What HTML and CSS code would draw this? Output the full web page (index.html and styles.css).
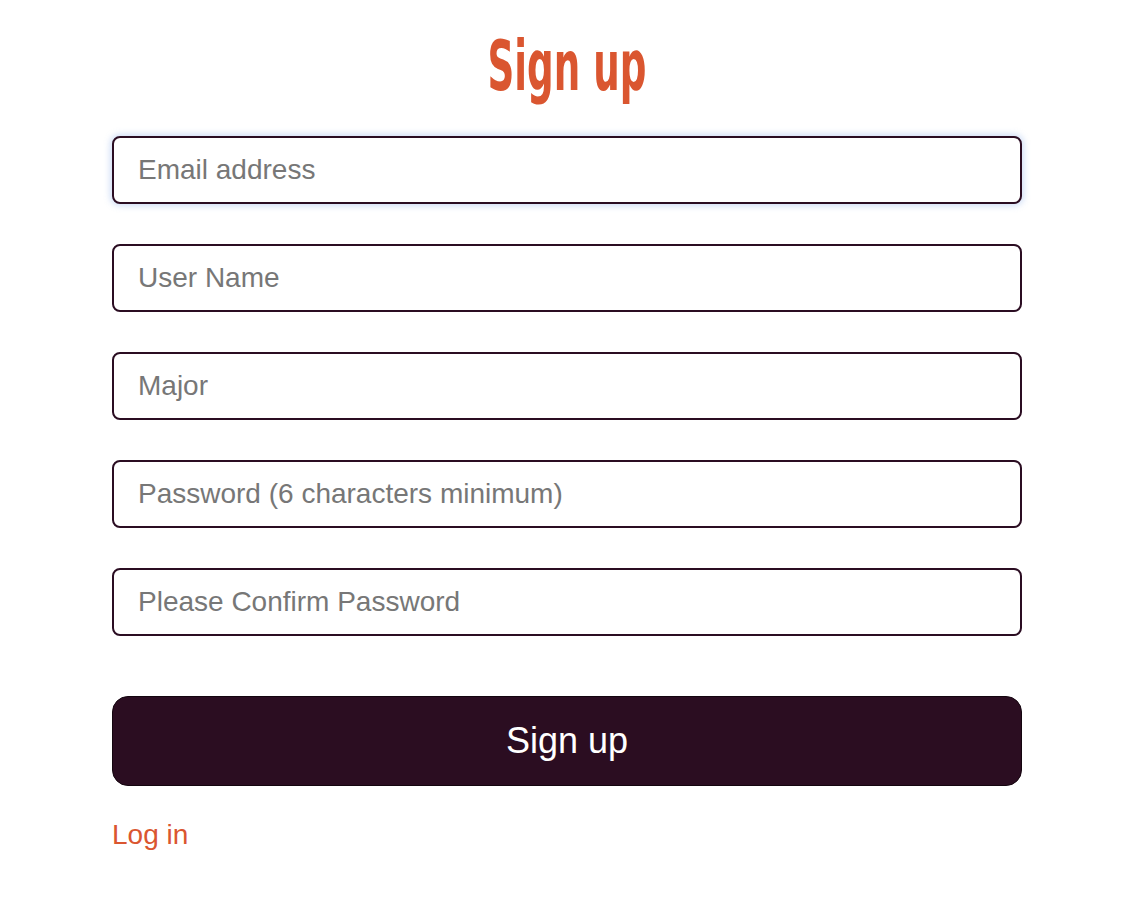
FILE: index.html
```html
<!DOCTYPE html>
<html lang="en">
<head>
<meta charset="utf-8">
<title>Sign up</title>
<link rel="stylesheet" href="styles.css">
</head>
<body>
<main class="page">
  <h1 class="title">Sign up</h1>
  <form class="form">
    <input class="field field--focus" type="email" placeholder="Email address">
    <input class="field" type="text" placeholder="User Name">
    <input class="field" type="text" placeholder="Major">
    <input class="field" type="password" placeholder="Password (6 characters minimum)">
    <input class="field" type="password" placeholder="Please Confirm Password">
    <button class="submit" type="button">Sign up</button>
  </form>
  <a class="login" href="#">Log in</a>
</main>
</body>
</html>
```

FILE: styles.css
```css
html, body {
  margin: 0;
  padding: 0;
  background: #ffffff;
}
body {
  font-family: "Liberation Sans", Arial, sans-serif;
}
.page {
  width: 910px;
  margin-left: 112px;
  padding-top: 30px;
}
.title {
  margin: 0 0 34px 0;
  text-align: center;
  font-family: "DejaVu Sans Condensed", "DejaVu Sans", sans-serif;
  font-weight: bold;
  font-size: 69px;
  line-height: 72px;
  color: #da5630;
  transform: scaleX(0.6);
}
.form {
  display: flex;
  flex-direction: column;
  gap: 40px;
}
.field {
  box-sizing: border-box;
  width: 100%;
  height: 68px;
  border: 2px solid #2b0d22;
  border-radius: 8px;
  padding: 0 24px;
  font-family: "Liberation Sans", Arial, sans-serif;
  font-size: 28px;
  color: #333;
  background: #fff;
  outline: none;
}
.field::placeholder {
  color: #777777;
}
.field--focus {
  box-shadow: 0 0 6px 2px rgba(120, 160, 230, 0.35);
}
.submit {
  box-sizing: border-box;
  margin-top: 20px;
  width: 100%;
  height: 90px;
  border: 1px solid #14050f;
  border-radius: 16px;
  background: #2b0d21;
  color: #ffffff;
  font-family: "Liberation Sans", Arial, sans-serif;
  font-size: 36px;
  cursor: pointer;
}
.login {
  display: inline-block;
  margin-top: 33px;
  font-size: 28px;
  line-height: 32px;
  color: #da5630;
  text-decoration: none;
}
```
